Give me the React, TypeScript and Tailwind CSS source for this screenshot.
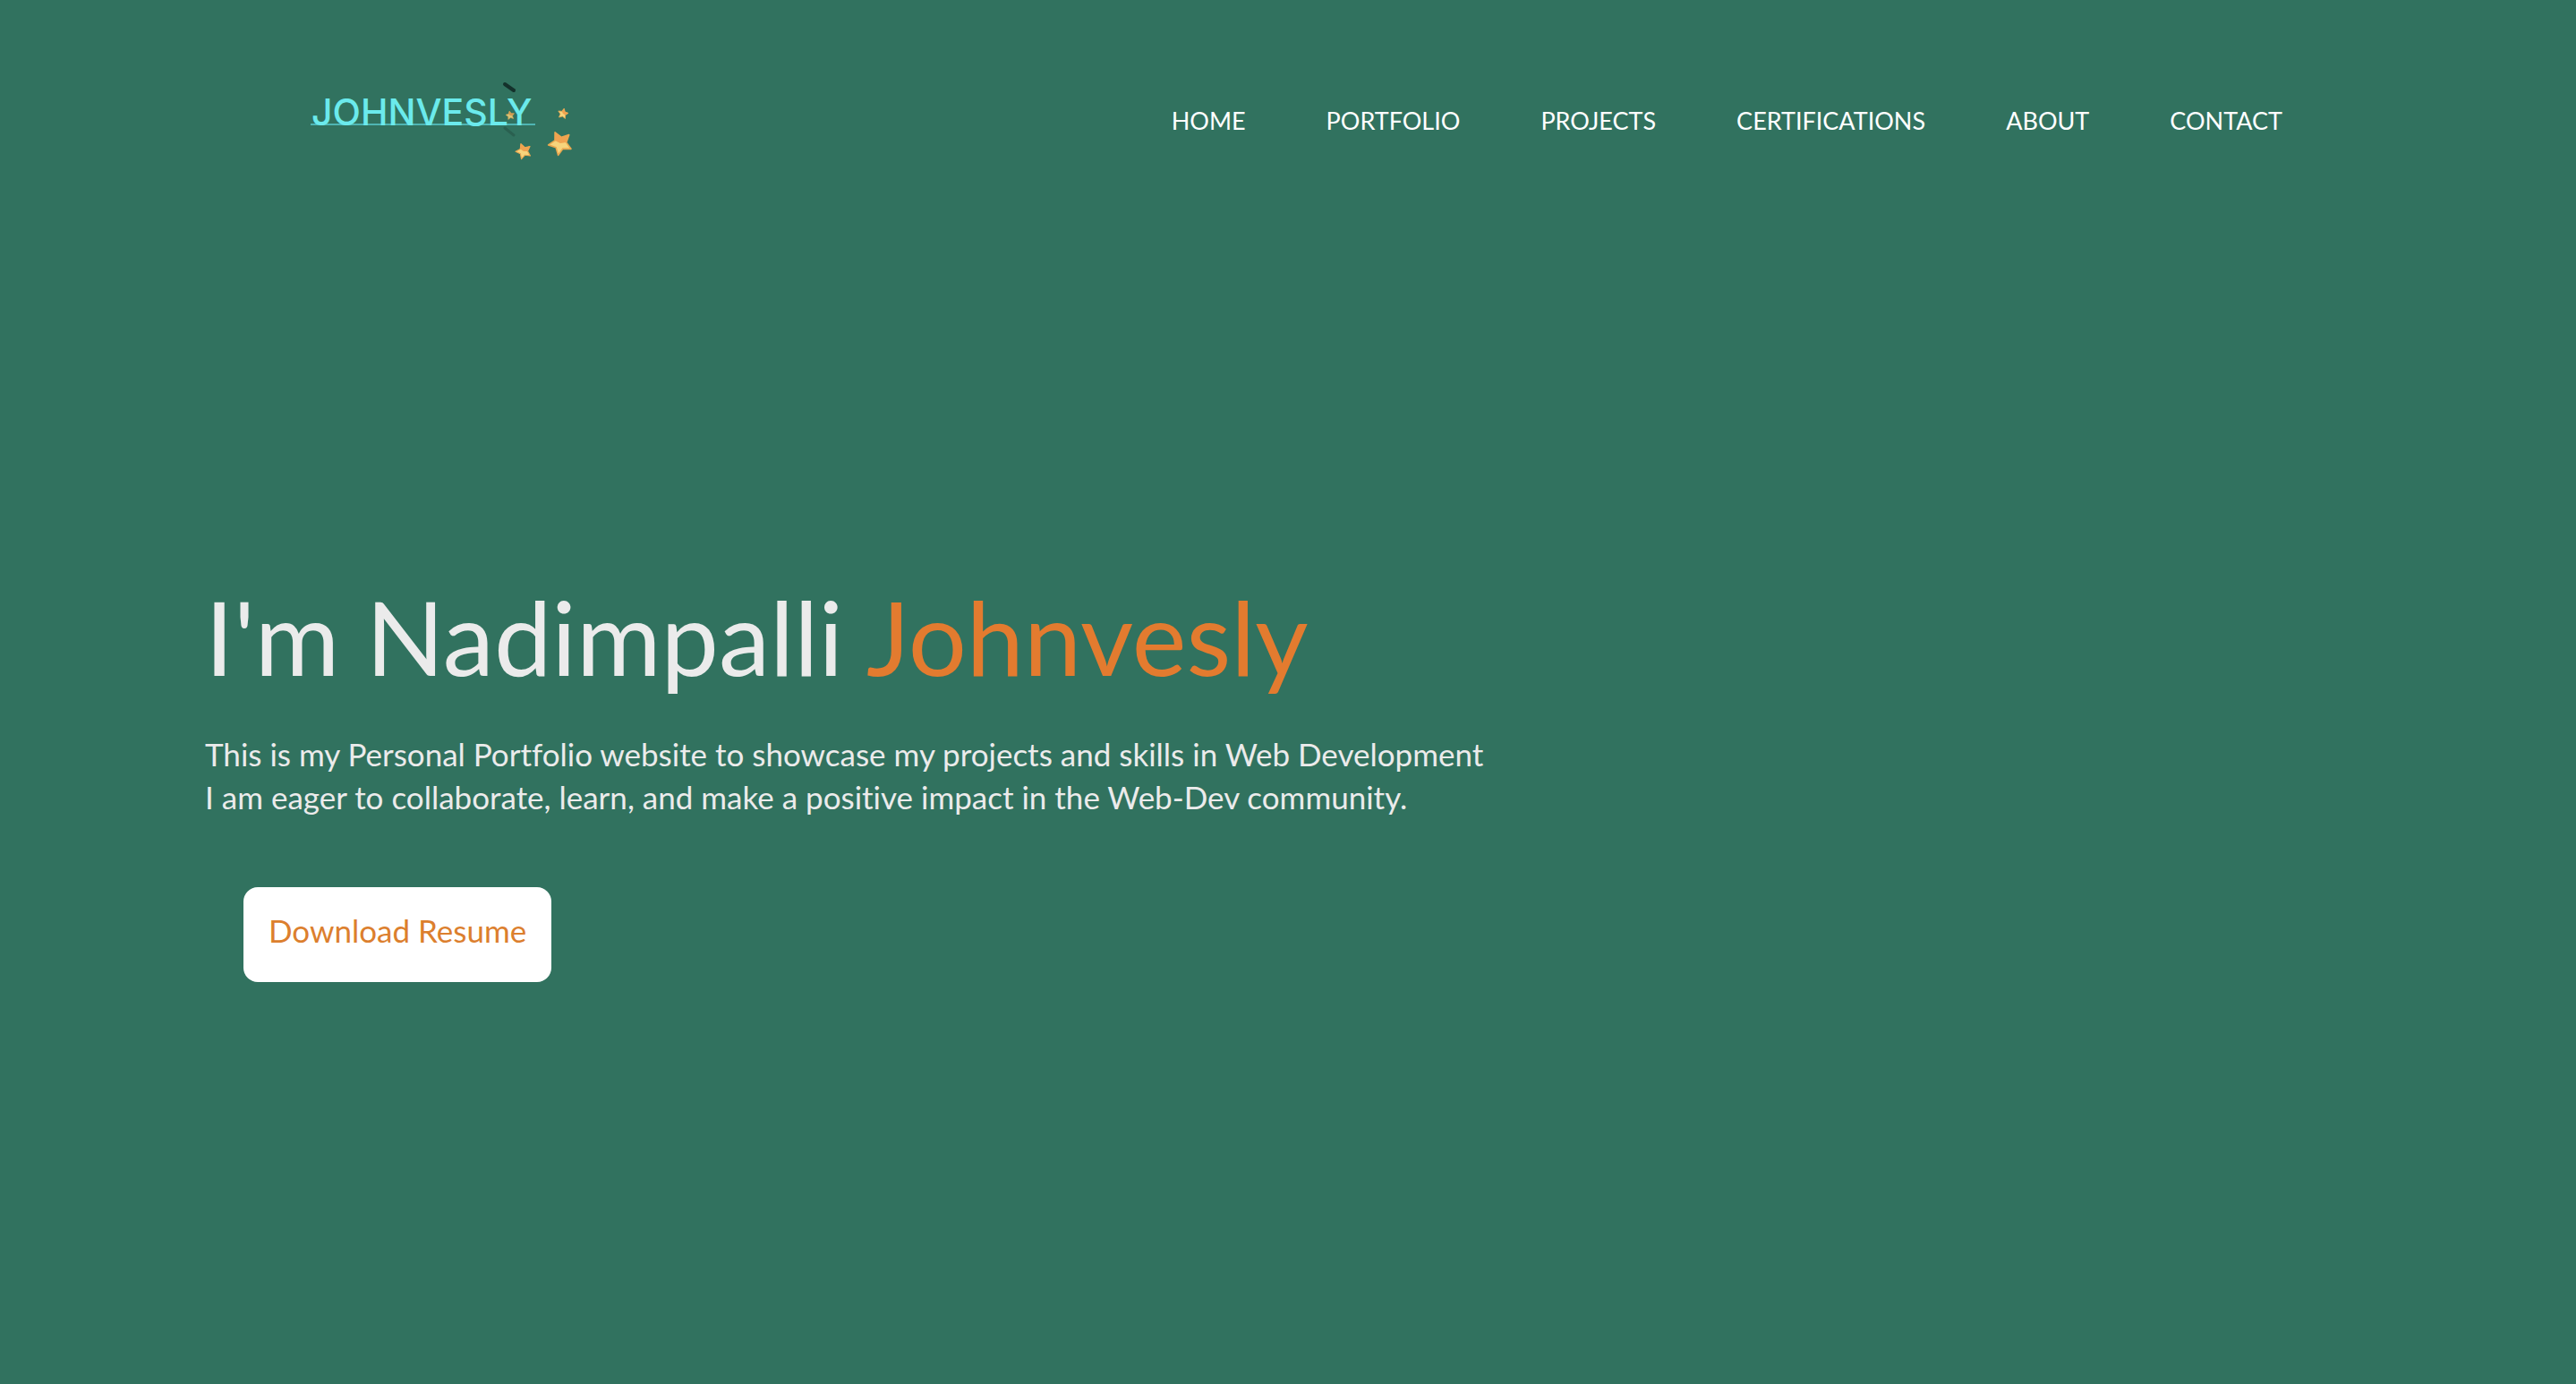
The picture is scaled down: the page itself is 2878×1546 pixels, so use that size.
const NAV_ITEMS = [
  { label: "HOME", href: "#home" },
  { label: "PORTFOLIO", href: "#portfolio" },
  { label: "PROJECTS", href: "#projects" },
  { label: "CERTIFICATIONS", href: "#certifications" },
  { label: "ABOUT", href: "#about" },
  { label: "CONTACT", href: "#contact" },
];

type StarProps = { x: number; y: number; size: number; turn: number; opacity?: number };

function Star({ x, y, size, turn, opacity = 1 }: StarProps) {
  return (
    <g transform={`translate(${x} ${y}) rotate(${turn}) scale(${size})`} opacity={opacity}>
      <path
        d="M0 -10 L3 -4 L9.5 -3.1 L4.8 1.6 L5.9 8.1 L0 5 L-5.9 8.1 L-4.8 1.6 L-9.5 -3.1 L-3 -4 Z"
        fill="#f6d47c"
        stroke="#e9a850"
        strokeWidth="1.2"
        strokeLinejoin="round"
      />
      <path d="M0 -10 L3 -4 L9.5 -3.1 L4.8 1.6 L0 0 L-3 -4 Z" fill="#f0a350" />
    </g>
  );
}

function Logo() {
  return (
    <svg viewBox="0 0 330 110" className="h-[110px] w-[330px]" role="img" aria-label="Johnvesly">
      <rect x="17" y="58" width="251" height="2" fill="#4fb5b3" />
      <text x="18" y="60" fill="#6beaec" fontSize="41" fontWeight="500" fontFamily="Inter, sans-serif">
        JOHNVESLY
      </text>
      <path d="M234 14 L244 21" stroke="#14312b" strokeWidth="4" strokeLinecap="round" />
      <path d="M234 63 L244 71" stroke="#2a6050" strokeWidth="3" strokeLinecap="round" />
      <Star x={240} y={49} size={0.5} turn={-10} opacity={0.85} />
      <Star x={299} y={47} size={0.6} turn={12} />
      <Star x={255} y={89} size={0.9} turn={-20} />
      <Star x={296} y={80} size={1.35} turn={-26} />
    </svg>
  );
}

export default function App() {
  return (
    <div className="min-h-screen bg-[#31725f] font-['Lato',sans-serif] text-white [font-variant-ligatures:none]">
      <header className="flex items-center justify-between pt-20 pr-[328px] pl-[330px]">
        <a href="#home">
          <Logo />
        </a>
        <nav aria-label="Main">
          <ul className="flex gap-[90px] text-[27px] leading-9">
            {NAV_ITEMS.map((item) => (
              <li key={item.label}>
                <a href={item.href}>{item.label}</a>
              </li>
            ))}
          </ul>
        </nav>
      </header>
      <main className="px-[229px] pt-[448px] text-[#ebebeb]">
        <h1 className="text-[115px] leading-[144px]">
          I'm Nadimpalli <span className="text-[#e37b2f]">Johnvesly</span>
        </h1>
        <p className="mt-9 text-[35px] leading-[48px]">
          This is my Personal Portfolio website to showcase my projects and skills in Web Development
          <br />
          I am eager to collaborate, learn, and make a positive impact in the Web-Dev community.
        </p>
        <button
          type="button"
          className="mt-[77px] ml-[43px] rounded-2xl bg-white px-7 pt-6 pb-[34px] text-[35px] leading-[48px] text-[#dc7f2e]"
        >
          Download Resume
        </button>
      </main>
    </div>
  );
}
